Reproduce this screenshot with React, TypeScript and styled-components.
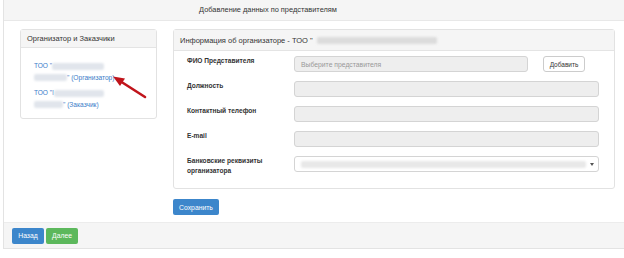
import React from "react";
import styled, { createGlobalStyle } from "styled-components";

const Global = createGlobalStyle`
  html, body { margin: 0; padding: 0; background: #fff; }
  body { font-family: "Liberation Sans", Arial, sans-serif; color: #333; }
`;

const Page = styled.div`
  width: 624px;
  height: 258px;
  overflow: hidden;
  position: relative;
`;

const Shell = styled.div`
  margin-left: 3px;
  width: 640px;
  border-left: 1px solid #e3e3e3;
  border-bottom: 1px solid #e3e3e3;
  display: flex;
  flex-direction: column;
`;

const TopBar = styled.div`
  height: 21px;
  background: #f5f5f5;
  border-bottom: 1px solid #e8e8e8;
  display: flex;
  align-items: center;
  justify-content: center;
  padding-right: 112px;
  padding-bottom: 2px;
  box-sizing: border-box;
  font-size: 7.4px;
  color: #333;
`;

const Content = styled.div`
  display: flex;
  align-items: flex-start;
  gap: 16px;
  padding: 8px 0 0 16px;
`;

const Panel = styled.div<{ $w: number }>`
  width: ${(p) => p.$w}px;
  border: 1px solid #e2e2e2;
  border-radius: 3px;
  background: #fff;
  box-sizing: border-box;
  position: relative;
`;

const PanelHead = styled.div<{ $h: number }>`
  height: ${(p) => p.$h}px;
  background: #f5f5f5;
  border-bottom: 1px solid #e4e4e4;
  display: flex;
  align-items: center;
  padding-left: 6px;
  font-size: 7.5px;
  color: #333;
  white-space: nowrap;
  overflow: hidden;
`;

const Blur = styled.span<{ $w: number; $c?: string }>`
  display: inline-block;
  width: ${(p) => p.$w}px;
  height: 7px;
  background: ${(p) => p.$c || "#e1e5ec"};
  filter: blur(1.2px);
  border-radius: 2px;
  vertical-align: middle;
`;

const LeftBody = styled.div`
  padding: 12px 0 8px 13px;
  display: flex;
  flex-direction: column;
  gap: 4px;
  height: 70px;
  box-sizing: border-box;
`;

const OrgLink = styled.div`
  font-size: 6.6px;
  line-height: 11.5px;
  color: #3a7bc8;
`;

const Arrow = styled.svg`
  position: absolute;
  left: 87px;
  top: 41px;
`;

const RightCol = styled.div`
  display: flex;
  flex-direction: column;
  align-items: flex-start;
  gap: 10px;
`;

const FormBody = styled.div`
  padding: 5px 14px 12px 13px;
  display: flex;
  flex-direction: column;
  gap: 9px;
`;

const Row = styled.div`
  display: flex;
  align-items: flex-start;
  min-height: 16px;
`;

const Label = styled.div`
  width: 107px;
  font-size: 6.6px;
  font-weight: bold;
  line-height: 10px;
  color: #333;
`;

const Field = styled.div<{ $w: number; $white?: boolean }>`
  width: ${(p) => p.$w}px;
  height: 16px;
  box-sizing: border-box;
  border: 1px solid #d4d4d4;
  border-radius: 3px;
  background: ${(p) => (p.$white ? "#fff" : "#eeeeee")};
  display: flex;
  align-items: center;
  padding: 0 6px;
  font-size: 6.8px;
  color: #999;
  position: relative;
`;

const Caret = styled.span`
  position: absolute;
  right: 4px;
  top: 6px;
  width: 0;
  height: 0;
  border-left: 2px solid transparent;
  border-right: 2px solid transparent;
  border-top: 3px solid #555;
`;

const AddBtn = styled.div`
  margin-left: 15px;
  width: 42px;
  height: 16px;
  box-sizing: border-box;
  border: 1px solid #ccc;
  border-radius: 3px;
  background: #fff;
  font-size: 6.5px;
  color: #333;
  display: flex;
  align-items: center;
  justify-content: center;
`;

const Btn = styled.div<{ $bg: string; $w: number }>`
  width: ${(p) => p.$w}px;
  height: 16px;
  background: ${(p) => p.$bg};
  border-radius: 2px;
  color: #fff;
  font-size: 6.8px;
  display: flex;
  align-items: center;
  justify-content: center;
`;

const Footer = styled.div`
  margin-top: 7px;
  height: 26px;
  background: #f5f5f5;
  border-top: 1px solid #ececec;
  box-sizing: border-box;
  display: flex;
  align-items: center;
  gap: 2px;
  padding-left: 8px;
`;

export default function App() {
  return (
    <Page>
      <Global />
      <Shell>
        <TopBar>Добавление данных по представителям</TopBar>
        <Content>
          <Panel $w={137}>
            <PanelHead $h={17}>Организатор и Заказчики</PanelHead>
            <LeftBody>
              <OrgLink>
                ТОО "<Blur $w={52} />
                <br />
                <Blur $w={33} />" (Организатор)
              </OrgLink>
              <OrgLink>
                ТОО "l<Blur $w={50} />
                <br />
                <Blur $w={29} />" (Заказчик)
              </OrgLink>
            </LeftBody>
            <Arrow width="45" height="32" viewBox="0 0 45 32">
              <line x1="37" y1="26" x2="12" y2="10" stroke="#c0141b" strokeWidth="2.6" strokeLinecap="round" />
              <polygon points="5,5.5 17,7.5 12,15" fill="#c0141b" />
            </Arrow>
          </Panel>
          <RightCol>
            <Panel $w={442}>
              <PanelHead $h={20}>
                Информация об организаторе - ТОО "&nbsp;&nbsp;
                <Blur $w={120} $c="#dcdcdc" />
              </PanelHead>
              <FormBody>
                <Row>
                  <Label>ФИО Представителя</Label>
                  <Field $w={234}>Выберите представителя</Field>
                  <AddBtn>Добавить</AddBtn>
                </Row>
                <Row>
                  <Label>Должность</Label>
                  <Field $w={305} />
                </Row>
                <Row>
                  <Label>Контактный телефон</Label>
                  <Field $w={305} />
                </Row>
                <Row>
                  <Label>E-mail</Label>
                  <Field $w={305} />
                </Row>
                <Row>
                  <Label>
                    Банковские реквизиты
                    <br />
                    организатора
                  </Label>
                  <Field $w={305} $white>
                    <Blur $w={285} $c="#e8e8e8" />
                    <Caret />
                  </Field>
                </Row>
              </FormBody>
            </Panel>
            <Btn $bg="#3c86cb" $w={46}>Сохранить</Btn>
          </RightCol>
        </Content>
        <Footer>
          <Btn $bg="#3c86cb" $w={32}>Назад</Btn>
          <Btn $bg="#5cb85c" $w={32}>Далее</Btn>
        </Footer>
      </Shell>
    </Page>
  );
}
